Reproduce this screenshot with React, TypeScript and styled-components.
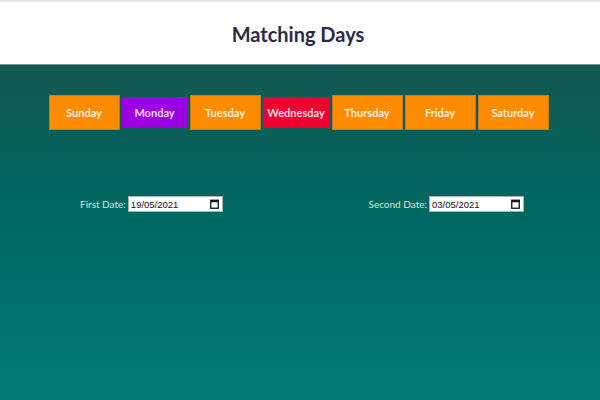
import React from "react";
import styled, { createGlobalStyle } from "styled-components";

const Global = createGlobalStyle`
  html, body { margin: 0; padding: 0; }
  body { font-family: Lato, "Open Sans", sans-serif; background: #fff; }
  #root { min-height: 100vh; display: flex; flex-direction: column; }
`;

const TopStrip = styled.div`
  height: 2px;
  background: #e6e6e6;
`;

const Header = styled.header`
  height: 62px;
  background: #fff;
  display: flex;
  align-items: center;
  justify-content: center;
`;

const Title = styled.h1`
  margin: 0 4px 0 0;
  font-family: Lato, sans-serif;
  font-weight: 700;
  font-size: 20px;
  color: #2c2b47;
  padding-top: 2px;
`;

const Main = styled.main`
  flex: 1;
  border-top: 1px solid #6f9a96;
  background: linear-gradient(180deg, #145752 0%, #016660 40%, #007d77 100%);
  padding-top: 30px;
  display: flex;
  flex-direction: column;
`;

const DayRow = styled.div`
  display: flex;
  justify-content: center;
  align-items: center;
  gap: 2px;
  padding-right: 3px;
`;

const DayBox = styled.div<{ $bg: string; $w: number; $active?: boolean }>`
  box-sizing: border-box;
  width: ${(p) => p.$w}px;
  height: ${(p) => (p.$active ? "31px" : "35px")};
  background: ${(p) => p.$bg};
  border: ${(p) => (p.$active ? "none" : "1px solid #c9781a")};
  display: flex;
  align-items: center;
  justify-content: center;
  color: rgba(255, 255, 255, 0.88);
  font-family: Lato, sans-serif;
  font-weight: 700;
  font-size: 11px;
`;

const DateRow = styled.div`
  margin-top: 66px;
  display: flex;
  justify-content: space-between;
  padding: 0 76px 0 80px;
`;

const DateGroup = styled.label`
  display: flex;
  align-items: center;
  gap: 2px;
`;

const DateLabel = styled.span`
  font-family: Lato, sans-serif;
  font-size: 10px;
  color: #d3e8e4;
`;

const DateField = styled.div`
  box-sizing: border-box;
  width: 95px;
  height: 16px;
  background: #fff;
  border: 1px solid #a9b1b0;
  display: flex;
  align-items: center;
  justify-content: space-between;
  padding: 0 3px 0 2px;
  font-family: "Liberation Sans", Arial, sans-serif;
  font-size: 9.5px;
  color: #111;
`;

const CalIcon = () => (
  <svg width="9" height="10" viewBox="0 0 9 10">
    <rect x="0.75" y="1.25" width="7.5" height="8" fill="none" stroke="#111" strokeWidth="1.3" />
    <rect x="0.75" y="1.25" width="7.5" height="2" fill="#111" />
  </svg>
);

const days = [
  { name: "Sunday", bg: "#ff8c00", w: 71 },
  { name: "Monday", bg: "#9d00e0", w: 66, active: true },
  { name: "Tuesday", bg: "#ff8c00", w: 71 },
  { name: "Wednesday", bg: "#ee0030", w: 67, active: true },
  { name: "Thursday", bg: "#ff8c00", w: 71 },
  { name: "Friday", bg: "#ff8c00", w: 71 },
  { name: "Saturday", bg: "#ff8c00", w: 71 },
];

export default function App() {
  return (
    <>
      <Global />
      <TopStrip />
      <Header>
        <Title>Matching Days</Title>
      </Header>
      <Main>
        <DayRow>
          {days.map((d) => (
            <DayBox key={d.name} $bg={d.bg} $w={d.w} $active={d.active}>
              {d.name}
            </DayBox>
          ))}
        </DayRow>
        <DateRow>
          <DateGroup>
            <DateLabel>First Date:</DateLabel>
            <DateField>
              <span>19/05/2021</span>
              <CalIcon />
            </DateField>
          </DateGroup>
          <DateGroup>
            <DateLabel>Second Date:</DateLabel>
            <DateField>
              <span>03/05/2021</span>
              <CalIcon />
            </DateField>
          </DateGroup>
        </DateRow>
      </Main>
    </>
  );
}
